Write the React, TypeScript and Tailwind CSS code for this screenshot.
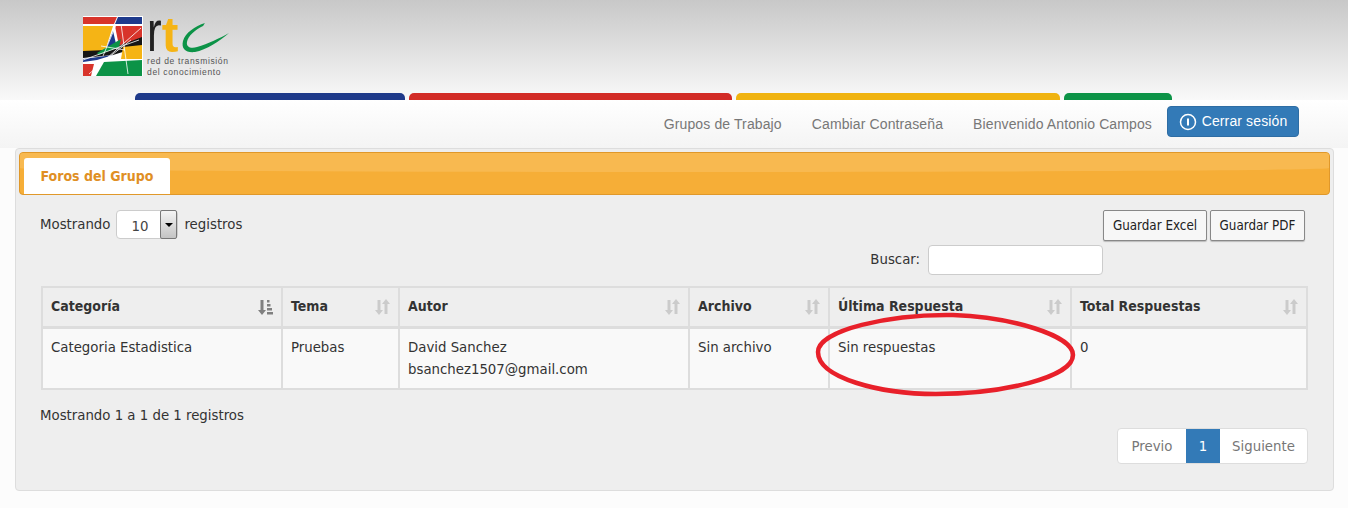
const font = "font-['DejaVu_Sans_Condensed','DejaVu_Sans',sans-serif]";
const cell = "border-2 border-[#ddd] px-[8px] pt-[7px]";

const columns = [
  { label: "Categoría", width: "w-[240px]", active: true },
  { label: "Tema", width: "w-[117px]" },
  { label: "Autor", width: "w-[290px]" },
  { label: "Archivo", width: "w-[140px]" },
  { label: "Última Respuesta", width: "w-[242px]" },
  { label: "Total Respuestas", width: "w-[236px]" },
];

const tabs = [
  { width: "w-[270px]", color: "bg-[#1f3a8a]" },
  { width: "w-[323px]", color: "bg-[#d22b26]" },
  { width: "w-[324px]", color: "bg-[#f0b310]" },
  { width: "w-[108px]", color: "bg-[#0c9347]" },
];

function SortIcon({ active }: { active?: boolean }) {
  const fill = active ? "#808080" : "#cbcbcb";
  return (
    <svg width="15" height="16" viewBox="0 0 15 16" fill={fill}>
      <path d="M2.500 1h3v10H8l-4 5-4-5h2.500z" />
      {active ? (
        <path d="M9 1h2.500v2.500H9zM9 5h3.500v2.500H9zM9 9h5v2.500H9zM9 13h6v2.500H9z" />
      ) : (
        <path d="M9.500 15V5H7l4-5 4 5h-2.500v10z" />
      )}
    </svg>
  );
}

function Logo() {
  return (
    <div className="flex items-start">
      <svg width="60" height="60" viewBox="0 0 60 60" className="shrink-0">
        <rect width="60" height="60" fill="#fff" />
        <path d="M0 1h34l-3 7H0z" fill="#d8342b" />
        <path d="M35 1h24v7H32z" fill="#1e3a8c" />
        <path d="M0 10h30l-8 25H0z" fill="#f5b415" />
        <path d="M32 10h27v12L36 30z" fill="#d8342b" />
        <path d="M30 15l-8 20 12-3z" fill="#1e3a8c" />
        <path d="M0 35l24-1 35-13v9L30 39 0 42z" fill="#161616" />
        <path d="M40 31l19-2v14H38z" fill="#f5b415" />
        <path d="M0 43l30-4-16 5-14 2z" fill="#1e3a8c" />
        <path d="M14 37l24-14-2 8-20 8z" fill="#0c9347" />
        <path d="M0 48h11l-3 12H0z" fill="#d8342b" />
        <path d="M13 60l8-14 38-2v16z" fill="#0c9347" />
        <g stroke="#fff" fill="none" strokeWidth="0.8">
          <path d="M6 58L58 12M0 44L56 24M18 30l24 4M38 8l7 50M12 52l36-28M33 9L20 40" />
        </g>
      </svg>
      <div className="relative ml-[4px] h-[60px] w-[84px] font-['Liberation_Sans',sans-serif] text-[#555]">
        <div className="flex h-[39px] items-end">
          <span className="origin-bottom scale-y-[1.3] text-[44px] leading-[36px] text-[#222]">r</span>
          <span className="text-[50px] font-bold leading-[40px] text-[#f5b415]">t</span>
        </div>
        <svg width="50" height="34" viewBox="0 0 50 34" className="absolute left-[33px] top-[5px]">
          <path
            d="M25 2C24 3 24 4 23 5 15 9 8 15 7 21c-1 5 4 7 10 5C28 23 40 17 49 12 40 20 26 29 15 31 6 32 1 28 3 20 5 12 15 5 25 2z"
            fill="#0c9347"
          />
        </svg>
        <div className="mt-[1px] text-[8.500px] leading-[11px] tracking-[0.65px]">
          <div>red de transmisión</div>
          <div>del conocimiento</div>
        </div>
      </div>
    </div>
  );
}

export default function App() {
  return (
    <div className={`relative h-[508px] w-[1348px] overflow-hidden bg-[#fcfcfc] ${font} text-[14.800px] text-[#333]`}>
      <header className="h-[100px] bg-gradient-to-b from-[#c8c8c8] to-[#f9f9f9] pt-[16px]">
        <div className="ml-[83px] h-[77px]">
          <Logo />
        </div>
        <div className="ml-[135px] flex gap-[4px]">
          {tabs.map((t) => (
            <div key={t.width} className={`h-[7px] rounded-t-[5px] ${t.width} ${t.color}`} />
          ))}
        </div>
      </header>

      <nav className="flex h-[48px] items-center justify-end bg-gradient-to-b from-white to-[#f4f4f4] pr-[49px] font-['Liberation_Sans',sans-serif] text-[14px] tracking-[0.12px] text-[#777]">
        <span>Grupos de Trabajo</span>
        <span className="ml-[30px]">Cambiar Contraseña</span>
        <span className="ml-[30px]">Bienvenido Antonio Campos</span>
        <button
          type="button"
          className="mb-[5px] ml-[15px] flex h-[31px] w-[132px] items-center justify-center gap-[5px] rounded-[4px] border border-[#2e6da4] bg-[#337ab7] text-white"
        >
          <svg width="18" height="18" viewBox="0 0 18 18" fill="none" stroke="#fff" strokeWidth="1.500">
            <circle cx="9" cy="9" r="7.500" />
            <path d="M9 5.500v7" strokeWidth="2" />
          </svg>
          Cerrar sesión
        </button>
      </nav>

      <main className="ml-[15px] mr-[14px] h-[343px] rounded-[4px] border border-[#ddd] bg-[#eee] px-[3px] pt-[3px]">
        <div className="relative h-[43px] overflow-hidden rounded-[4px] border border-[#e0982a] bg-[#f6ae37] pl-[4px] pt-[5px]">
          <div className="absolute inset-x-0 top-0 h-[19px] rounded-b-[50%_4px] bg-[#f8b950]" />
          <div className="relative flex h-[36px] w-[146px] items-center justify-center rounded-t-[3px] bg-white text-[14px] font-bold text-[#e08f24]">
            Foros del Grupo
          </div>
        </div>

        <div className="pl-[21px] pr-[22px]">
          <div className="flex h-[50px] items-start justify-between pt-[15px]">
            <div className="flex items-center">
              <span className="-mt-[1px]">Mostrando</span>
              <div className="ml-[6px] flex h-[29px] w-[62px] items-stretch rounded-[4px] border border-[#ccc] bg-white">
                <span className="flex-1 pl-[14px] pt-[4px] text-[#444]">10</span>
                <span className="my-[-1px] flex w-[17px] items-center justify-center rounded-[2px] border border-[#777] bg-gradient-to-b from-[#f4f4f4] to-[#c4c4c4]">
                  <span className="h-0 w-0 border-x-[4px] border-t-[4px] border-x-transparent border-t-black" />
                </span>
              </div>
              <span className="-mt-[1px] ml-[6px]">registros</span>
            </div>
            <div className="mr-[3px] flex gap-[3px] text-[13.300px] text-[#222]">
              <button type="button" className="h-[31px] w-[104px] rounded-[2px] border border-[#888] bg-[#f7f7f7] shadow-[0_1px_1px_#bbb]">
                Guardar Excel
              </button>
              <button type="button" className="h-[31px] w-[95px] rounded-[2px] border border-[#888] bg-[#f7f7f7] shadow-[0_1px_1px_#bbb]">
                Guardar PDF
              </button>
            </div>
          </div>

          <div className="flex h-[30px] items-center justify-end pr-[205px]">
            <span className="-mt-[2px]">Buscar:</span>
            <div className="ml-[8px] h-[30px] w-[175px] shrink-0 rounded-[4px] border border-[#ccc] bg-white" />
          </div>

          <table className="ml-[1px] mt-[11px] w-[1265px] table-fixed border-collapse">
            <thead>
              <tr className="h-[40px]">
                {columns.map((c) => (
                  <th key={c.label} className={`border-2 border-b-[3px] border-[#ddd] px-[8px] text-left text-[14px] font-bold ${c.width}`}>
                    <div className="flex items-center justify-between">
                      {c.label}
                      <SortIcon active={c.active} />
                    </div>
                  </th>
                ))}
              </tr>
            </thead>
            <tbody>
              <tr className="h-[62px] bg-[#f9f9f9] align-top leading-[22px]">
                <td className={cell}>Categoria Estadistica</td>
                <td className={cell}>Pruebas</td>
                <td className={cell}>
                  David Sanchez
                  <br />
                  bsanchez1507@gmail.com
                </td>
                <td className={cell}>Sin archivo</td>
                <td className={cell}>Sin respuestas</td>
                <td className={cell}>0</td>
              </tr>
            </tbody>
          </table>

          <div className="mt-[14px] flex items-start justify-between">
            <span>Mostrando 1 a 1 de 1 registros</span>
            <div className="mt-[24px] flex h-[36px] items-stretch overflow-hidden rounded-[4px] border border-[#ddd] bg-white text-[#777]">
              <span className="flex w-[68px] items-center justify-center">Previo</span>
              <span className="flex w-[34px] items-center justify-center bg-[#337ab7] text-white">1</span>
              <span className="flex w-[87px] items-center justify-center">Siguiente</span>
            </div>
          </div>
        </div>
      </main>

      {/* hand drawn marker someone put on the screenshot */}
      <svg width="270" height="95" viewBox="810 308 270 95" fill="none" className="absolute left-[810px] top-[308px]">
        <path
          d="M953 315C1010 317 1073 335 1073 355 1073 378 1000 394 936 394 880 394 818 378 818 352 818 330 890 314 953 315Z"
          stroke="#e8202a"
          strokeWidth="4.500"
        />
      </svg>
    </div>
  );
}
